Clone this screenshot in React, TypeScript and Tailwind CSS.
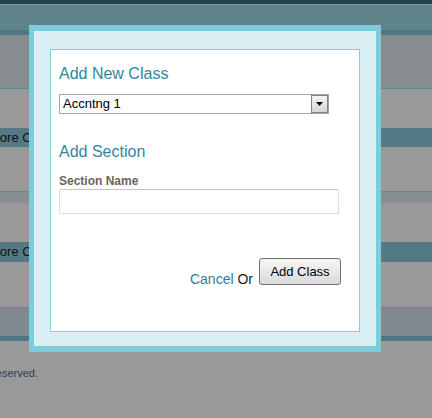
import React from "react";

function PageBehind() {
  return (
    <div className="flex flex-col">
      {/* header */}
      <div className="h-[4px] bg-[#1d434e]" />
      <div className="h-px bg-[#8a9ea1]" />
      <div className="h-[25px] bg-[#5f838a]" />
      <div className="h-[5px] bg-[#4e7782]" />
      <div className="h-[53px] bg-[#878d8f]" />
      <div className="h-px bg-[#5b8893]" />
      <div className="h-[39px]" />

      {/* first class row */}
      <div className="flex h-[19px] items-center overflow-hidden bg-[#547a85] text-[13px] text-[#111]">
        <span className="ml-[-11px] whitespace-nowrap">More Classes</span>
      </div>
      <div className="h-[44px]" />
      <div className="h-px bg-[#5f8a94]" />
      <div className="h-[11px] bg-[#878f91]" />
      <div className="h-[39px]" />

      {/* second class row */}
      <div className="flex h-[20px] items-center overflow-hidden bg-[#547a85] text-[13px] text-[#111]">
        <span className="ml-[-11px] whitespace-nowrap">More Classes</span>
      </div>
      <div className="h-[45px]" />
      <div className="h-px bg-[#5f8a94]" />
      <div className="h-[28px] bg-[#7f8b8e]" />
      <div className="h-[5px] bg-[#4e7782]" />
      <div className="h-[26px]" />

      {/* footer */}
      <div className="flex w-[38px] justify-end overflow-hidden whitespace-nowrap text-[11px] leading-[13px] text-[#25434e]">
        <span>© 2013 All rights reserved.</span>
      </div>
    </div>
  );
}

function AddClassModal() {
  return (
    <div className="absolute left-[29px] top-[25px] h-[327px] w-[352px] border-x-[5px] border-y-[6px] border-[#7ecbdc] bg-[#daeff4] px-4 pt-[18px] pb-[14px]">
      <div className="h-full border border-[#8dcbd8] bg-white pl-2 pt-[15px]">
        <h2 className="text-[16px] leading-[18px] text-[#2f87a2]">Add New Class</h2>

        <div className="mt-[11px] flex h-[20px] w-[270px] items-center border border-[#a5a5a5] bg-white">
          <span className="pl-[3px] text-[13px] leading-[16px] text-black">Accntng 1</span>
          <div className="ml-auto flex h-[18px] w-[17px] items-center justify-center border border-[#858585] bg-linear-to-b from-[#f4f4f4] to-[#d6d6d6]">
            <svg width="7" height="4" viewBox="0 0 7 4">
              <path d="M0 0h7L3.5 4z" fill="#000" />
            </svg>
          </div>
        </div>

        <h2 className="mt-[29px] text-[16px] leading-[18px] text-[#2f87a2]">Add Section</h2>

        <label className="mt-[13px] block text-[12px] font-bold leading-[14px] text-[#686460]">
          Section Name
        </label>
        <div className="mt-[1px] h-[25px] w-[280px] rounded-[2px] border border-[#dcdcdc] border-t-[#c4c4c4] bg-white" />

        <div className="mt-[44px] flex w-[282px] items-end justify-end gap-[6px]">
          <span className="mb-[-2px] text-[14px] leading-[16px]">
            <span className="text-[#2f7e99]">Cancel</span>{" "}
            <span className="text-[#222]">Or</span>
          </span>
          <button className="h-[27px] w-[82px] rounded-[3px] border border-[#707070] bg-linear-to-b from-[#f7f7f7] to-[#dadada] text-[13px] leading-[16px] text-black">
            Add Class
          </button>
        </div>
      </div>
    </div>
  );
}

export default function App() {
  return (
    <div className="relative h-[418px] w-[432px] overflow-hidden bg-[#999999] font-['Liberation_Sans',Arial,sans-serif]">
      <PageBehind />
      <AddClassModal />
    </div>
  );
}
